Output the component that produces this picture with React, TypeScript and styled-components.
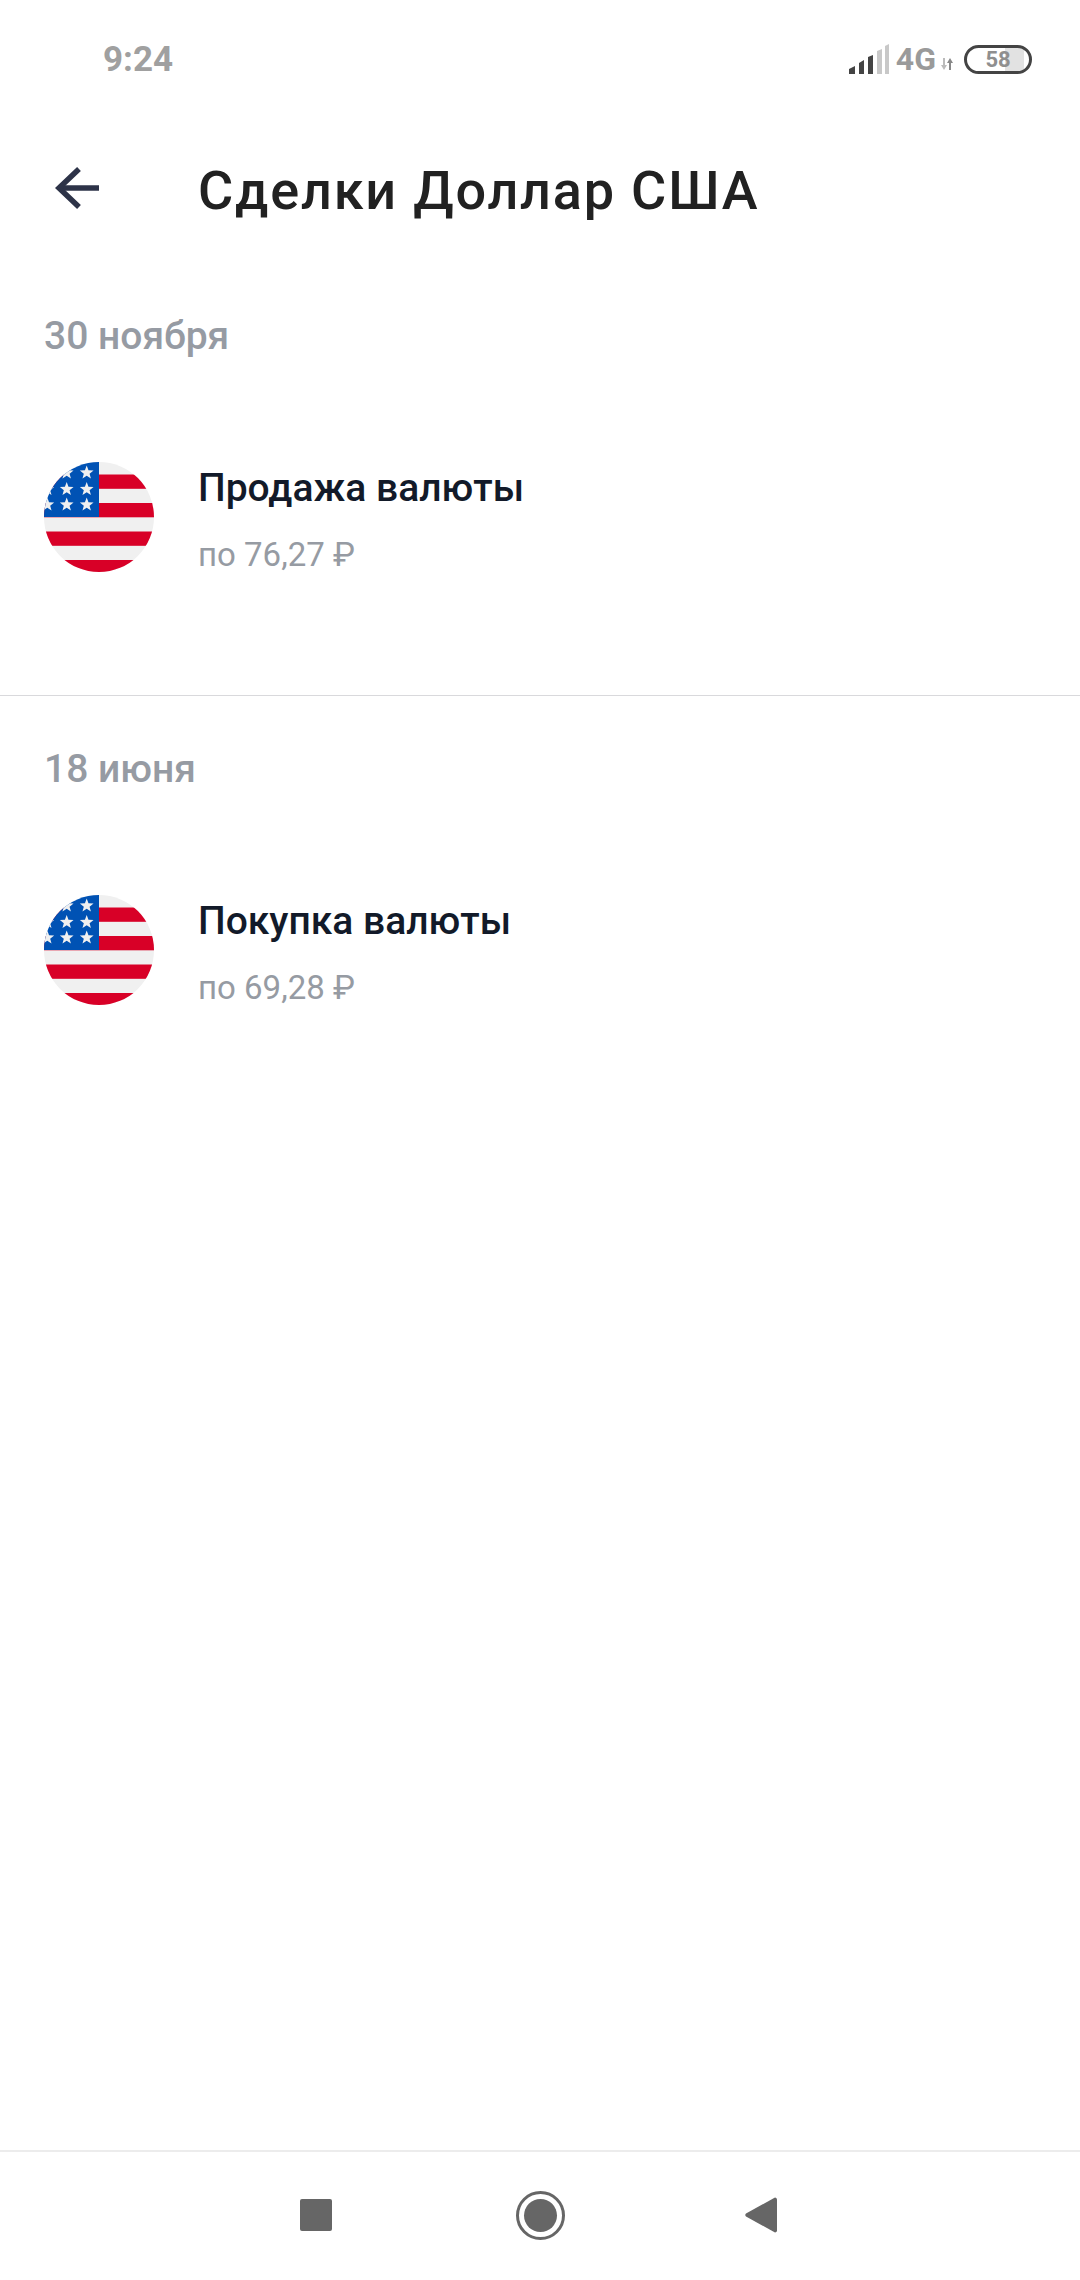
import React from "react";
import styled, { createGlobalStyle } from "styled-components";

const GlobalStyle = createGlobalStyle`
  html, body {
    margin: 0;
    padding: 0;
    background: #fff;
    font-family: Roboto, "Noto Sans", sans-serif;
  }
`;

const Screen = styled.div`
  width: 1080px;
  height: 2280px;
  display: flex;
  flex-direction: column;
  background: #fff;
  overflow: hidden;
`;

const StatusBar = styled.div`
  height: 118px;
  flex: none;
  display: flex;
  justify-content: space-between;
  align-items: center;
  padding: 0 48px 0 103px;
  box-sizing: border-box;
`;

const Clock = styled.span`
  font-size: 35px;
  font-weight: 700;
  color: #a0a0a0;
`;

const StatusIcons = styled.div`
  display: flex;
  align-items: center;
`;

const NetworkLabel = styled.span`
  font-size: 32px;
  font-weight: 700;
  color: #9a9a9a;
  margin-left: 7px;
`;

const Battery = styled.div`
  width: 68px;
  height: 29px;
  margin-left: 10px;
  box-sizing: border-box;
  border: 3.5px solid #444;
  border-radius: 15px;
  display: flex;
  align-items: center;
  justify-content: center;
  font-size: 22px;
  font-weight: 700;
  color: #8f8f8f;
  background: linear-gradient(90deg, #fff 0 62%, #e2e2e2 62% 92%, #fff 92%);
`;

const Header = styled.header`
  height: 145px;
  flex: none;
  display: flex;
  align-items: center;
  padding-left: 55px;
  box-sizing: border-box;
`;

const BackIcon = styled.svg`
  width: 44px;
  height: 42px;
  flex: none;
  margin: 0 99px 6px 0;
`;

const Title = styled.h1`
  margin: 0;
  font-size: 54px;
  font-weight: 500;
  letter-spacing: 1.8px;
  color: #212121;
`;

const Section = styled.section<{ $divided?: boolean }>`
  height: 433px;
  flex: none;
  box-sizing: border-box;
  padding: 0 44px;
  border-bottom: ${({ $divided }) => ($divided ? "1px solid #d9d9dc" : "none")};
`;

const DateLabel = styled.div`
  height: 146px;
  margin-bottom: 50px;
  display: flex;
  align-items: center;
  font-size: 39px;
  font-weight: 500;
  color: #969ba3;
`;

const Deal = styled.div`
  display: flex;
  align-items: center;
  gap: 44px;
`;

const FlagIcon = styled.svg`
  width: 110px;
  height: 110px;
  flex: none;
`;

const DealText = styled.div`
  display: flex;
  flex-direction: column;
  gap: 22px;
  padding-top: 4px;
`;

const DealTitle = styled.div`
  font-size: 39px;
  line-height: 50px;
  font-weight: 500;
  color: #121a29;
`;

const DealPrice = styled.div`
  font-size: 33px;
  line-height: 40px;
  color: #969ba3;
`;

const Spacer = styled.div`
  flex: 1;
`;

const NavBar = styled.nav`
  height: 130px;
  flex: none;
  box-sizing: border-box;
  border-top: 2px solid #ececec;
  display: flex;
  align-items: center;
  justify-content: center;
  gap: 180px;
  padding: 0 4px 2px 0;
`;

const NavSquare = styled.div`
  width: 32px;
  height: 32px;
  margin-right: 4px;
  border-radius: 2px;
  background: #666;
`;

const NavHome = styled.div`
  width: 49px;
  height: 49px;
  box-sizing: border-box;
  border: 3px solid #666;
  border-radius: 50%;
  padding: 5px;
`;

const NavHomeDot = styled.div`
  width: 100%;
  height: 100%;
  border-radius: 50%;
  background: #666;
`;

const NavBack = styled.svg`
  width: 32px;
  height: 36px;
`;

const STRIPES = [12.5, 41, 69.5, 98];
const STARS = [
  [22.7, 10.7],
  [42.7, 10.7],
  [3.3, 27.3],
  [22.7, 27.3],
  [42.7, 27.3],
  [3.3, 42.7],
  [22.7, 42.7],
  [42.7, 42.7],
];

const starPoints = (cx: number, cy: number, r = 7.2) => {
  const pts: string[] = [];
  for (let i = 0; i < 10; i++) {
    const rad = i % 2 === 0 ? r : r * 0.42;
    const a = (Math.PI / 5) * i - Math.PI / 2;
    pts.push(`${cx + rad * Math.cos(a)},${cy + rad * Math.sin(a)}`);
  }
  return pts.join(" ");
};

const UsFlag = ({ id }: { id: string }) => (
  <FlagIcon viewBox="0 0 110 110">
    <defs>
      <clipPath id={id}>
        <circle cx="55" cy="55" r="55" />
      </clipPath>
    </defs>
    <g clipPath={`url(#${id})`}>
      <rect width="110" height="110" fill="#f0f0f0" />
      {STRIPES.map((y) => (
        <rect key={y} x="0" y={y} width="110" height="14.3" fill="#d80027" />
      ))}
      <rect x="0" y="0" width="55" height="55" fill="#0052b4" />
      {STARS.map(([x, y]) => (
        <polygon key={`${x}-${y}`} points={starPoints(x, y)} fill="#f0f0f0" />
      ))}
    </g>
  </FlagIcon>
);

const SignalIcon = () => (
  <svg width="40" height="30" viewBox="0 0 40 30">
    <path d="M0 30v-5l6-3v8z" fill="#444" />
    <path d="M10 30V19l5-3v14z" fill="#444" />
    <path d="M19 30V13l5-2v19z" fill="#444" />
    <path d="M28 30V7l5-2v25z" fill="#c8c8c8" />
    <path d="M36 30V2l4-2v30z" fill="#c8c8c8" />
  </svg>
);

const TransferGlyph = styled.svg`
  width: 14px;
  height: 12px;
  align-self: flex-end;
  margin: 0 0 8px 4px;
`;

const TransferIcon = () => (
  <TransferGlyph viewBox="0 0 14 12">
    <path d="M3 0h2v7h2l-3 5-3-5h2z" fill="#bbb" />
    <path d="M10 0l3 5h-2v7H9V5H7z" fill="#888" />
  </TransferGlyph>
);

const deals = [
  { date: "30 ноября", title: "Продажа валюты", price: "по 76,27 ₽", divided: true },
  { date: "18 июня", title: "Покупка валюты", price: "по 69,28 ₽", divided: false },
];

export default function App() {
  return (
    <Screen>
      <GlobalStyle />
      <StatusBar>
        <Clock>9:24</Clock>
        <StatusIcons>
          <SignalIcon />
          <NetworkLabel>4G</NetworkLabel>
          <TransferIcon />
          <Battery>58</Battery>
        </StatusIcons>
      </StatusBar>
      <Header>
        <BackIcon viewBox="0 0 44 42" fill="none" stroke="#2d3348" strokeWidth="5.5">
          <path d="M44 21H4" />
          <path d="M24 2L4 21l20 19" />
        </BackIcon>
        <Title>Сделки Доллар США</Title>
      </Header>
      {deals.map((deal, i) => (
        <Section key={deal.date} $divided={deal.divided}>
          <DateLabel>{deal.date}</DateLabel>
          <Deal>
            <UsFlag id={`flag-${i}`} />
            <DealText>
              <DealTitle>{deal.title}</DealTitle>
              <DealPrice>{deal.price}</DealPrice>
            </DealText>
          </Deal>
        </Section>
      ))}
      <Spacer />
      <NavBar>
        <NavSquare />
        <NavHome>
          <NavHomeDot />
        </NavHome>
        <NavBack viewBox="0 0 32 36">
          <path d="M30 0.5c1 0 2 1 2 2v31c0 1-1 2-2 2L1 19.5c-1-.8-1-2 0-3z" fill="#666" />
        </NavBack>
      </NavBar>
    </Screen>
  );
}
